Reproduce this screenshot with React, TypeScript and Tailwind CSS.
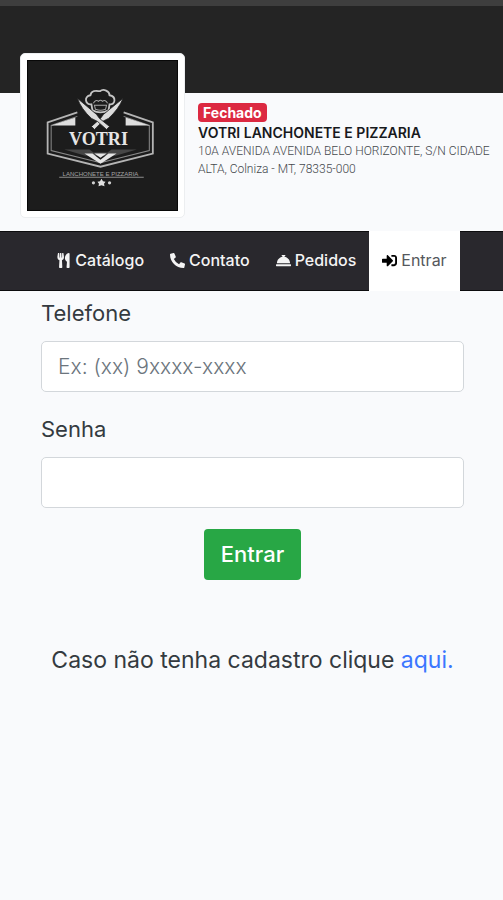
import React, { useState } from 'react';
import { FaConciergeBell, FaPhoneAlt, FaSignInAlt, FaUtensils } from 'react-icons/fa';

const links = [
  { label: 'Catálogo', icon: FaUtensils, active: false },
  { label: 'Contato', icon: FaPhoneAlt, active: false },
  { label: 'Pedidos', icon: FaConciergeBell, active: false },
  { label: 'Entrar', icon: FaSignInAlt, active: true },
];

function Logo() {
  return (
    <svg className="block w-full bg-[#1c1c1c]" viewBox="0 0 150 150" role="img" aria-label="Votri Lanchonete e Pizzaria">
      <rect x="0.5" y="0.5" width="149" height="149" fill="none" stroke="#080808" />

      {/* Shield */}
      <g fill="none" stroke="#b4b4b4">
        <path d="M50 52 L20.5 62 V93 L73 106 L125 93 V62 L96 52" strokeWidth="1.8" />
        <path d="M50 56 L24 65 V90 L73 102 L121.500 90 V65 L96 56" strokeWidth="1" stroke="#8a8a8a" />
      </g>
      <path d="M24 65 L48 57 V65 Z M122 65 L98 57 V65 Z" fill="#dedede" />
      <path d="M37 89 H62 L66 92 H80 L84 89 H109 L88 95 H58 Z" fill="#464646" />
      <path d="M57 93 H65 L73 99 L81 93 H89 L73 103 Z M67 93 H79 L73 97 Z" fill="#e4e4e4" />

      {/* Chef hat */}
      <path
        d="M65 50 L64 44 C58 45 56 36 63 35 C64 29 70 31 72.500 31 C76 28 82 31 82 35 C89 36 88 45 82 44 L81 50 Q73 54 65 50 Z"
        fill="#1c1c1c"
        stroke="#c4c4c4"
        strokeWidth="1.8"
      />
      <path d="M66 43 Q68 39 71 41 Q73 39 75 41 Q78 39 80 43 M67 45 H79 L78 49 Q73 51 68 49 Z" fill="none" stroke="#a5a5a5" strokeWidth="1" />

      {/* Knives */}
      <g fill="#dcdcdc" stroke="#1c1c1c" strokeWidth="0.8">
        <path d="M95.500 38 L76 54 L73 58 L64 66 L67 69 L75 61 L81 58 Q91 49 95.500 38 Z" />
        <path d="M50 38 L69 54 L72 58 L82 66 L79 69 L70 61 L64 58 Q54 49 50 38 Z" />
      </g>

      <text x="71" y="84" textAnchor="middle" fill="#e6e6e6" fontSize="18" fontWeight="700" fontFamily="Liberation Serif, serif">
        VOTRI
      </text>
      <text x="73" y="115" textAnchor="middle" fill="#a5a5a5" fontSize="6" fontFamily="Liberation Sans, sans-serif">
        LANCHONETE E PIZZARIA
      </text>
      <path d="M32 116.500 H116" stroke="#8c8c8c" strokeWidth="1" />
      <path
        d="M74 118 L75.500 120.500 L78 121 L76.500 123 L77 125.500 L74 124.500 L71 125.500 L71.500 123 L70 121 L72.500 120.500 Z"
        fill="#e0e0e0"
      />
      <circle cx="66" cy="122" r="1.600" fill="#d0d0d0" />
      <circle cx="82" cy="122" r="1.600" fill="#d0d0d0" />
    </svg>
  );
}

export default function App() {
  const [phone, setPhone] = useState('');
  const [password, setPassword] = useState('');

  const handleSubmit = (e: React.FormEvent) => {
    e.preventDefault();
  };

  return (
    <div className="min-h-screen bg-[#f9fafc] font-['Inter',sans-serif] text-[#343a40]">
      {/* Store header */}
      <header>
        <div className="h-[93px] border-t-6 border-[#3e3e3e] bg-[#242424]" />
        <div className="flex items-start gap-[13px] pb-[13px] pl-5">
          <div className="-mt-10 w-[165px] shrink-0 rounded-[5px] border border-[#eceef0] bg-white p-[6px]">
            <Logo />
          </div>
          <div className="pt-[10px]">
            <span className="block w-fit rounded bg-[#dc2941] px-[5px] text-sm leading-[19px] font-bold text-white">Fechado</span>
            <h1 className="mt-[2px] text-sm leading-[18px] font-semibold whitespace-nowrap text-[#17191c]">VOTRI LANCHONETE E PIZZARIA</h1>
            <p className="font-['Roboto',sans-serif] text-[12px] leading-[18px] font-light whitespace-nowrap text-[#45494e]">
              10A AVENIDA AVENIDA BELO HORIZONTE, S/N CIDADE
              <br />
              ALTA, Colniza - MT, 78335-000
            </p>
          </div>
        </div>
      </header>

      {/* Navigation */}
      <nav className="flex h-[60px] justify-center border-y border-[#0c0c0e] bg-[#29282d]">
        {links.map(({ label, icon: Icon, active }) => (
          <a
            key={label}
            href="#"
            className={
              active
                ? '-my-px flex items-center gap-1 bg-white px-[13px] pb-[2px] text-base text-[#55585c]'
                : 'flex items-center gap-1 px-[13px] pb-[2px] text-base font-medium text-[#f4f4f4]'
            }
          >
            <Icon className={active ? 'size-[15px] text-black' : 'size-[15px]'} />
            {label}
          </a>
        ))}
      </nav>

      {/* Login form */}
      <main className="pt-[6px] pr-[39px] pl-[41px]">
        <form onSubmit={handleSubmit}>
          <label htmlFor="phone" className="block text-[22px] leading-[32px]">Telefone</label>
          <input
            id="phone"
            type="tel"
            placeholder="Ex: (xx) 9xxxx-xxxx"
            value={phone}
            onChange={(e) => setPhone(e.target.value)}
            className="mt-3 h-[51px] w-full rounded-[5px] border border-[#d3d7db] bg-white px-4 text-[21px] font-light outline-none placeholder:text-[#6c757d]"
          />
          <label htmlFor="password" className="mt-[21px] block text-[22px] leading-[32px]">Senha</label>
          <input
            id="password"
            type="password"
            value={password}
            onChange={(e) => setPassword(e.target.value)}
            className="mt-3 h-[51px] w-full rounded-[5px] border border-[#d3d7db] bg-white px-4 text-[21px] outline-none"
          />
          <div className="mt-[21px] flex justify-center">
            <button type="submit" className="h-[51px] cursor-pointer rounded bg-[#28a745] px-[17px] text-[22px] font-medium text-white">
              Entrar
            </button>
          </div>
        </form>
        <p className="mt-16 text-center text-[23px] leading-[32px]">
          Caso não tenha cadastro clique <a href="#" className="text-[#3b76ff]">aqui.</a>
        </p>
      </main>
    </div>
  );
}
